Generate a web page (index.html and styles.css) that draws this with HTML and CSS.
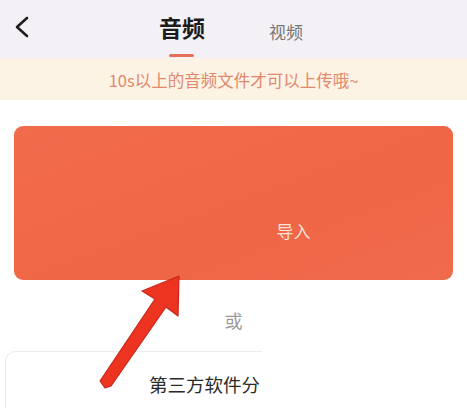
FILE: index.html
```html
<!DOCTYPE html>
<html lang="zh-CN">
<head>
    <meta charset="UTF-8">
    <meta name="viewport" content="width=device-width, initial-scale=1.0">
    <title>上传音频</title>
    <link rel="stylesheet" href="styles.css">
</head>
<body>

<div class="page">
    <div class="header">
        <div class="back">
            <svg width="16" height="24" viewBox="0 0 16 24">
                <path d="M13 3 L3 12 L13 21" fill="none" stroke="#1f1f1f" stroke-width="2.6" stroke-linecap="round" stroke-linejoin="round"/>
            </svg>
        </div>
        <div class="tabs">
            <div class="tab active">音频</div>
            <div class="tab">视频</div>
        </div>
    </div>

    <div class="notice">10s以上的音频文件才可以上传哦~</div>

    <div class="content">
        <div class="import-card">导入</div>
        <div class="or">或</div>
        <div class="share-card">第三方软件分</div>
    </div>

    <svg class="arrow" width="467" height="408" viewBox="0 0 467 408">
        <polygon points="179,276 142,291 155,299 100,381 105,388 111,386 166,307 178,316"
                 fill="#ec3421" stroke="#c9261a" stroke-width="1.2" stroke-linejoin="round"/>
    </svg>
</div>

</body>
</html>
```

FILE: styles.css
```css
body {
    margin: 0;
    font-family: "Noto Sans CJK SC", "Noto Sans", sans-serif;
    background: #ffffff;
    color: #222222;
}

.page {
    position: relative;
    width: 467px;
    height: 408px;
    overflow: hidden;
}

.header {
    display: flex;
    align-items: flex-start;
    height: 58px;
    padding-left: 14px;
    background: #f4f1f6;
    box-sizing: border-box;
}

.back {
    margin-top: 15px;
}

.tabs {
    display: flex;
    align-items: flex-start;
    gap: 64px;
    margin-left: 129px;
}

.tab {
    position: relative;
    margin-top: 20px;
    font-size: 17px;
    line-height: 24px;
    color: #777777;
}

.tab.active {
    margin-top: 11px;
    font-size: 23px;
    line-height: 32px;
    font-weight: bold;
    color: #1c1c1c;
}

.tab.active::after {
    content: "";
    position: absolute;
    left: 10px;
    top: 43px;
    width: 25px;
    height: 3px;
    border-radius: 2px;
    background: #e5705a;
}

.notice {
    height: 42px;
    padding-top: 2px;
    box-sizing: border-box;
    line-height: 40px;
    text-align: center;
    font-size: 16.5px;
    color: #e1876b;
    background: #fdf3e5;
}

.content {
    display: flex;
    flex-direction: column;
    padding: 26px 14px 0 14px;
}

.import-card {
    display: flex;
    align-items: center;
    justify-content: center;
    height: 154px;
    padding: 54px 0 0 120px;
    box-sizing: border-box;
    border-radius: 9px;
    background: linear-gradient(160deg, #f26b4c, #ef6646 60%, #f06a4c);
    color: #fde3da;
    font-size: 17px;
}

.or {
    margin-top: 28px;
    text-align: center;
    font-size: 18px;
    line-height: 24px;
    color: #9a9a9a;
}

.share-card {
    width: 257px;
    height: 70px;
    margin: 19px 0 0 -9px;
    padding: 19px 0 0 143px;
    box-sizing: border-box;
    border-top: 1px solid #ececec;
    border-left: 1px solid #ececec;
    border-top-left-radius: 10px;
    font-size: 18.5px;
    line-height: 26px;
    color: #2a2a2a;
    white-space: nowrap;
    overflow: hidden;
}

.arrow {
    position: absolute;
    left: 0;
    top: 0;
}
```
